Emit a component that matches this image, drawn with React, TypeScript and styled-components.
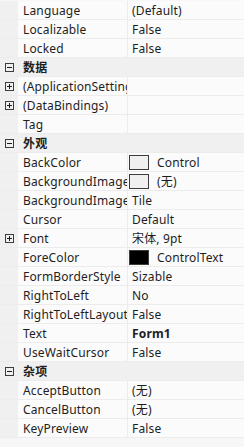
import { createGlobalStyle, styled } from "styled-components";

const GlobalStyle = createGlobalStyle`
    html, body {
        margin:0;
        padding:0;
        background:#f7f7f7;
    }
`;

const Grid = styled.div`
    width:244px;
    height:447px;
    overflow:hidden;
    padding-top:1px;
    box-sizing:border-box;
    background:#f7f7f7;
    font-family: "Noto Sans", "Noto Sans CJK SC", sans-serif;
    font-size:12px;
    letter-spacing:0.15px;
    color:#1e1e1e;
    display:flex;
    flex-direction:column;
`;

const Row = styled.div<{ $category?: boolean }>`
    display:flex;
    height:19px;
    align-items:stretch;
    background:${(p) => (p.$category ? "#f0f0f0" : "#fbfbfb")};
    border-bottom:1px solid #ececec;
    box-sizing:border-box;
    font-weight:${(p) => (p.$category ? "bold" : "normal")};
`;

const Gutter = styled.div`
    width:18px;
    flex:none;
    display:flex;
    align-items:center;
    justify-content:center;
    background:#f0f0f0;
`;

const Name = styled.div`
    width:110px;
    flex:none;
    padding-left:5px;
    box-sizing:border-box;
    white-space:nowrap;
    overflow:hidden;
    display:flex;
    align-items:center;
    border-right:1px solid #ececec;
`;

const Value = styled.div<{ $bold?: boolean }>`
    flex:1;
    display:flex;
    align-items:center;
    gap:8px;
    padding-left:4px;
    white-space:nowrap;
    overflow:hidden;
    font-weight:${(p) => (p.$bold ? "bold" : "normal")};
`;

const Title = styled.div`
    display:flex;
    align-items:center;
    padding-left:5px;
`;

const Swatch = styled.span<{ $fill: string }>`
    width:18px;
    height:13px;
    border:1px solid #3c3c3c;
    background:${(p) => p.$fill};
    flex:none;
    margin-left:-3px;
`;

function Toggle({ open }: { open: boolean }) {
    return (
        <svg width="9" height="9" viewBox="0 0 9 9">
            <rect x="0.5" y="0.5" width="8" height="8" fill="none" stroke="#3c3c3c" />
            <line x1="2" y1="4.5" x2="7" y2="4.5" stroke="#1e1e1e" />
            {!open && <line x1="4.5" y1="2" x2="4.5" y2="7" stroke="#1e1e1e" />}
        </svg>
    );
}

type Item =
    | { kind: "cat"; title: string }
    | { kind: "prop"; name: string; value: string; expand?: boolean; swatch?: string; bold?: boolean };

const items: Item[] = [
    { kind: "prop", name: "Language", value: "(Default)" },
    { kind: "prop", name: "Localizable", value: "False" },
    { kind: "prop", name: "Locked", value: "False" },
    { kind: "cat", title: "数据" },
    { kind: "prop", name: "(ApplicationSettings)", value: "", expand: true },
    { kind: "prop", name: "(DataBindings)", value: "", expand: true },
    { kind: "prop", name: "Tag", value: "" },
    { kind: "cat", title: "外观" },
    { kind: "prop", name: "BackColor", value: "Control", swatch: "#f0f0f0" },
    { kind: "prop", name: "BackgroundImage", value: "(无)", swatch: "#f0f0f0" },
    { kind: "prop", name: "BackgroundImageLayout", value: "Tile" },
    { kind: "prop", name: "Cursor", value: "Default" },
    { kind: "prop", name: "Font", value: "宋体, 9pt", expand: true },
    { kind: "prop", name: "ForeColor", value: "ControlText", swatch: "#000000" },
    { kind: "prop", name: "FormBorderStyle", value: "Sizable" },
    { kind: "prop", name: "RightToLeft", value: "No" },
    { kind: "prop", name: "RightToLeftLayout", value: "False" },
    { kind: "prop", name: "Text", value: "Form1", bold: true },
    { kind: "prop", name: "UseWaitCursor", value: "False" },
    { kind: "cat", title: "杂项" },
    { kind: "prop", name: "AcceptButton", value: "(无)" },
    { kind: "prop", name: "CancelButton", value: "(无)" },
    { kind: "prop", name: "KeyPreview", value: "False" },
];

export default function App() {
    return (
        <>
            <GlobalStyle />
            <Grid>
                {items.map((it, i) =>
                    it.kind === "cat" ? (
                        <Row key={i} $category>
                            <Gutter><Toggle open /></Gutter>
                            <Title>{it.title}</Title>
                        </Row>
                    ) : (
                        <Row key={i}>
                            <Gutter>{it.expand && <Toggle open={false} />}</Gutter>
                            <Name>{it.name}</Name>
                            <Value $bold={it.bold}>
                                {it.swatch && <Swatch $fill={it.swatch} />}
                                {it.value}
                            </Value>
                        </Row>
                    )
                )}
            </Grid>
        </>
    );
}
